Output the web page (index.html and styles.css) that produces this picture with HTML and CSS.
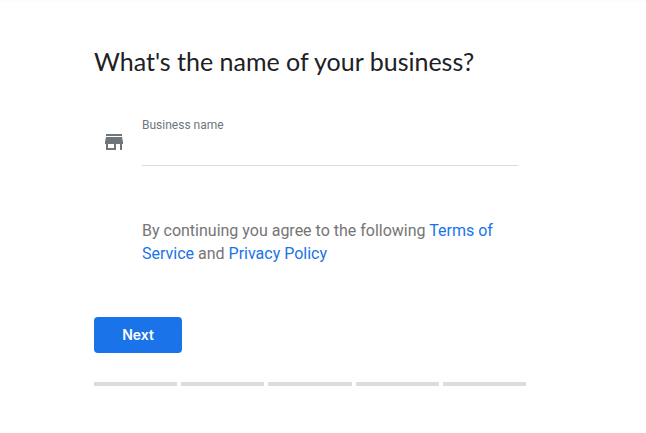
FILE: index.html
```html
<!DOCTYPE html>
<html lang="en">
<head>
<meta charset="utf-8">
<meta name="viewport" content="width=device-width, initial-scale=1">
<title>Business name</title>
<link rel="stylesheet" href="styles.css">
</head>
<body>
<main class="page">
  <form class="step">
    <h1 class="title">What's the name of your business?</h1>
    <div class="row">
      <svg class="icon" viewBox="0 0 24 24" aria-hidden="true"><path d="M20 4H4v2h16V4zm1 10v-2l-1-5H4l-1 5v2h1v6h10v-6h4v6h2v-6h1zm-9 4H6v-4h6v4z"/></svg>
      <div class="content">
        <label class="label" for="business-name">Business name</label>
        <input class="input" id="business-name" type="text" autocomplete="organization">
        <p class="terms">By continuing you agree to the following <a href="#terms">Terms of Service</a> and <a href="#privacy">Privacy Policy</a></p>
      </div>
    </div>
    <button class="next" type="submit">Next</button>
    <div class="progress" aria-hidden="true">
      <span></span><span></span><span></span><span></span><span></span>
    </div>
  </form>
</main>
</body>
</html>
```
FILE: styles.css
```css
* {
  box-sizing: border-box;
}

body {
  margin: 0;
  background: #fff;
  color: #202124;
  font-family: Roboto, "Liberation Sans", sans-serif;
}

.page {
  padding: 45px 120px 40px 94px;
  border-top: 2px solid #fcfcfc;
}

.step {
  max-width: 432px;
}

.title {
  margin: 0 0 41px;
  font: 400 25px/28px Lato, sans-serif;
  white-space: nowrap;
}

.row {
  display: flex;
  gap: 16px;
  padding: 0 8px;
}

.icon {
  flex: none;
  width: 24px;
  height: 24px;
  margin-top: 14px;
  fill: #70757a;
}

.content {
  flex: 1;
  min-width: 0;
}

.label {
  display: block;
  font-size: 12px;
  line-height: 18px;
  color: #70757a;
}

.input {
  display: block;
  width: 100%;
  height: 32px;
  padding: 0;
  border: 0;
  border-bottom: 1px solid #dadce0;
  background: none;
  font: 16px/24px Roboto, sans-serif;
  color: inherit;
  outline: none;
}

.terms {
  margin: 53px 0 0;
  font-size: 16px;
  line-height: 23px;
  color: #757575;
}

.terms a {
  color: #1a73e8;
  text-decoration: none;
}

.next {
  display: block;
  height: 36px;
  min-width: 88px;
  margin: 52px 0 29px;
  padding: 0 24px;
  border: 0;
  border-radius: 4px;
  background: #1a73e8;
  color: #fff;
  font: 600 14px/20px Inter, sans-serif;
}

.progress {
  display: flex;
  gap: 4px;
}

.progress span {
  flex: 1;
  height: 4px;
  background: #dadce0;
}
```
